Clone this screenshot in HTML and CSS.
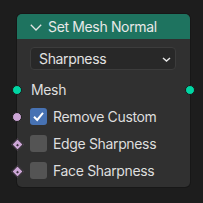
FILE: index.html
```html
<!DOCTYPE html>
<html>
<head>
<meta charset="utf-8">
<link rel="stylesheet" href="styles.css">
</head>
<body>
<div class="node">
  <div class="header">
    <svg class="chev" width="12" height="7" viewBox="0 0 12 7"><path d="M0.8 0.8 L6 6 L11.2 0.8" fill="none" stroke="#e4e4e4" stroke-width="1.3"/></svg>
    <span class="title">Set Mesh Normal</span>
  </div>
  <div class="body">
    <div class="select">
      <span>Sharpness</span>
      <svg class="dd" width="9" height="5" viewBox="0 0 9 5"><path d="M1 1 L4.5 4 L8 1" fill="none" stroke="#e6e6e6" stroke-width="1.5"/></svg>
    </div>
    <div class="rows">
      <div class="row">
        <span class="sock geo left"></span>
        <span class="label">Mesh</span>
        <span class="sock geo right"></span>
      </div>
      <div class="row">
        <span class="sock bool left"></span>
        <span class="check on"><svg width="17" height="17" viewBox="0 0 17 17"><path d="M4 8.8 L7.2 12 L13 4.8" fill="none" stroke="#fff" stroke-width="2"/></svg></span>
        <span class="label">Remove Custom</span>
      </div>
      <div class="row">
        <span class="diamond"></span>
        <span class="check"></span>
        <span class="label">Edge Sharpness</span>
      </div>
      <div class="row">
        <span class="diamond"></span>
        <span class="check"></span>
        <span class="label">Face Sharpness</span>
      </div>
    </div>
  </div>
</div>
</body>
</html>
```

FILE: styles.css
```css
html, body {
  margin: 0;
  padding: 0;
  background: #1d1d1d;
  font-family: Inter, "Noto Sans", sans-serif;
  font-size: 14px;
  letter-spacing: -0.35px;
  color: #e0e0e0;
}
body {
  width: 203px;
  height: 203px;
  overflow: hidden;
}
.node {
  margin: 14px 0 0 17px;
  width: 173px;
  height: 173px;
  border-radius: 5px;
  background: #303030;
  box-shadow: 0 0 0 1px #171717;
  display: flex;
  flex-direction: column;
}
.header {
  height: 25px;
  background: #1e735f;
  border-radius: 5px 5px 0 0;
  display: flex;
  align-items: center;
  padding-left: 13px;
  gap: 6px;
  color: #e8e8e8;
}
.chev {
  display: block;
  margin-top: 1px;
}
.title {
  line-height: 25px;
}
.body {
  padding: 8px 0 4px;
  display: flex;
  flex-direction: column;
}
.select {
  margin: 0 14px 0 13px;
  height: 23px;
  box-sizing: border-box;
  border: 1px solid #3c3c3c;
  border-radius: 4px;
  background: #282828;
  display: flex;
  align-items: center;
  justify-content: space-between;
  padding: 0 4px 0 8px;
  color: #e2e2e2;
}
.dd {
  display: block;
  margin-top: 1px;
}
.rows {
  margin-top: 6px;
  display: flex;
  flex-direction: column;
}
.row {
  position: relative;
  height: 27px;
  display: flex;
  align-items: center;
  padding-left: 13px;
  gap: 5px;
}
.label {
  padding-left: 1px;
  color: #dedede;
}
.sock {
  position: absolute;
  top: 50%;
  width: 10px;
  height: 10px;
  margin-top: -5px;
  border-radius: 50%;
  box-sizing: border-box;
  border: 1px solid #1a1a1a;
}
.sock.left { left: -5px; }
.sock.right { right: -5px; }
.geo { background: #00d6a3; }
.bool { background: #cca6d6; }
.diamond {
  position: absolute;
  left: -4px;
  top: 50%;
  width: 7px;
  height: 7px;
  margin-top: -4px;
  transform: rotate(45deg);
  background: #cca6d6;
  border: 1px solid #1a1a1a;
  box-sizing: content-box;
}
.diamond::after {
  content: "";
  position: absolute;
  left: 2.5px;
  top: 2.5px;
  width: 2px;
  height: 2px;
  background: #3a2f3d;
}
.check {
  width: 17px;
  height: 17px;
  border-radius: 3px;
  background: #545454;
  flex: none;
}
.check.on {
  background: #4772b3;
}
.check svg {
  display: block;
}
```
